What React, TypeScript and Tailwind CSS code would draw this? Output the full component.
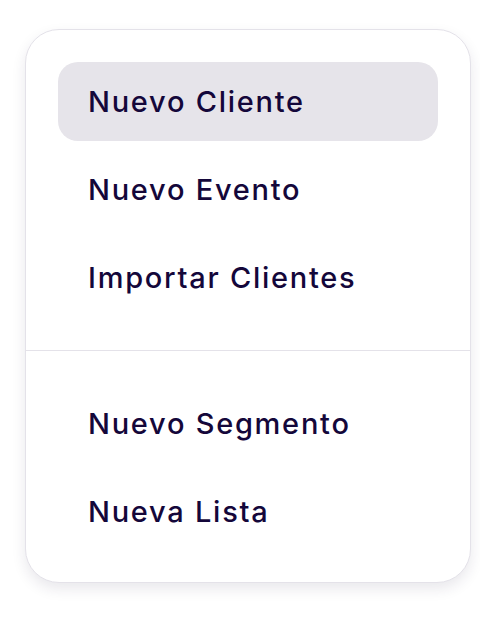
const groups = [
  ["Nuevo Cliente", "Nuevo Evento", "Importar Clientes"],
  ["Nuevo Segmento", "Nueva Lista"],
];

export default function App() {
  return (
    <div className="w-[480px] h-[630px] bg-white pt-[29px] pl-[25px]" style={{ fontFamily: "Inter, 'Noto Sans', sans-serif" }}>
      <div className="w-[446px] rounded-[34px] border border-[#e4e2e9] bg-white shadow-[0_6px_14px_rgba(40,30,70,0.10)]">
        {groups.map((items, gi) => (
          <div key={gi} className={gi > 0 ? "border-t border-[#e4e2e9]" : ""}>
            <ul className={`px-8 flex flex-col gap-[9px] ${gi === 0 ? "pt-8 pb-[33px]" : "pt-[33px] pb-[31px]"}`}>
              {items.map((item, i) => (
                <li
                  key={item}
                  className={`h-[79px] flex items-center pl-[30px] rounded-[20px] text-[29px] font-[550] tracking-[0.06em] text-[#14073a] ${
                    gi === 0 && i === 0 ? "bg-[#e6e4ea]" : ""
                  }`}
                >
                  {item}
                </li>
              ))}
            </ul>
          </div>
        ))}
      </div>
    </div>
  );
}
